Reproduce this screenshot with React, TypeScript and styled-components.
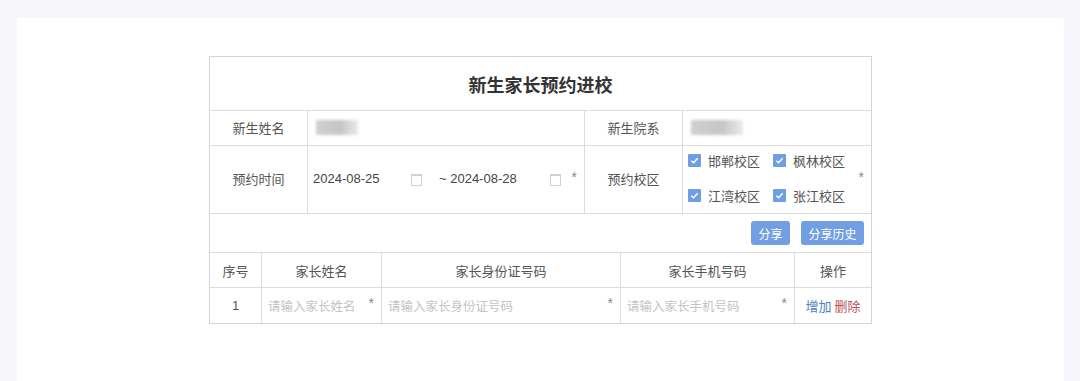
import styled, { createGlobalStyle } from "styled-components";

const GlobalStyle = createGlobalStyle`
  body {
    margin: 0;
    background: #f7f7fb;
    font-family: "Liberation Sans", "Noto Sans CJK SC", sans-serif;
    color: #555;
  }
`;

const Page = styled.div`
  padding: 18px 16px 0 17px;
  height: 381px;
  box-sizing: border-box;
`;

const Panel = styled.div`
  background: #ffffff;
  height: 100%;
  padding-top: 38px;
  box-sizing: border-box;
`;

const Card = styled.div`
  width: 663px;
  margin: 0 auto;
  border: 1px solid #d4d4d4;
  box-sizing: border-box;
  font-size: 13px;
`;

const Title = styled.div`
  height: 53px;
  display: flex;
  align-items: center;
  justify-content: center;
  font-size: 18px;
  font-weight: 700;
  color: #333;
  border-bottom: 1px solid #dcdcdc;
`;

const InfoGrid = styled.div`
  display: grid;
  grid-template-columns: 98px 277px 98px 1fr;
  grid-template-rows: 35px 68px;
`;

const Label = styled.div`
  display: flex;
  align-items: center;
  justify-content: center;
  padding-bottom: 2px;
  border-right: 1px solid #dcdcdc;
  border-bottom: 1px solid #dcdcdc;
  color: #555;
`;

const Value = styled.div<{ $last?: boolean }>`
  display: flex;
  align-items: center;
  padding-left: 5px;
  border-right: ${(p) => (p.$last ? "none" : "1px solid #dcdcdc")};
  border-bottom: 1px solid #dcdcdc;
  position: relative;
  color: #444;
`;

const Blur = styled.div<{ $w: number }>`
  width: ${(p) => p.$w}px;
  height: 15px;
  margin-left: 3px;
  margin-bottom: 2px;
  background: linear-gradient(90deg, #cfcfcf 0%, #c6c6c6 60%, #ececec 100%);
  filter: blur(1.5px);
`;

const DateText = styled.span<{ $w: number }>`
  width: ${(p) => p.$w}px;
  color: #444;
  padding-bottom: 2px;
`;

const CalIcon = styled.span`
  width: 9px;
  height: 9px;
  border: 1px solid #d0d0d0;
  border-top-width: 2px;
  margin-right: 17px;
`;

const Star = styled.span`
  color: #8a8a8a;
  font-size: 14px;
  position: absolute;
  right: 7px;
  top: 50%;
  transform: translateY(-70%);
`;

const CampusGrid = styled.div`
  display: grid;
  grid-template-columns: 85px 85px;
  row-gap: 14px;
  margin-top: -3px;
`;

const CheckItem = styled.label`
  display: flex;
  align-items: center;
  gap: 7px;
  color: #555;
  height: 21px;
`;

const Box = styled.span`
  width: 13px;
  height: 13px;
  background: #6f9ee2;
  border-radius: 1px;
  display: flex;
  align-items: center;
  justify-content: center;
`;

const ButtonBar = styled.div`
  height: 38px;
  display: flex;
  align-items: center;
  justify-content: flex-end;
  gap: 11px;
  padding-right: 7px;
  border-bottom: 1px solid #dcdcdc;
`;

const Button = styled.button`
  height: 24px;
  padding: 0 7.5px;
  border: none;
  border-radius: 3px;
  background: #729fe3;
  color: #fff;
  font-size: 12px;
  font-family: inherit;
`;

const ParentTable = styled.div`
  display: grid;
  grid-template-columns: 52px 120px 239px 174px 1fr;
  grid-auto-rows: 35px;
`;

const HeadCell = styled.div<{ $last?: boolean; $bottom?: boolean }>`
  display: flex;
  align-items: center;
  justify-content: center;
  border-right: ${(p) => (p.$last ? "none" : "1px solid #dcdcdc")};
  border-bottom: ${(p) => (p.$bottom ? "1px solid #dcdcdc" : "none")};
  color: #555;
`;

const InputCell = styled.div`
  display: flex;
  align-items: center;
  padding-left: 6px;
  border-right: 1px solid #dcdcdc;
  position: relative;
  color: #c4c4c4;
  font-size: 12.5px;
`;

const Actions = styled.div`
  display: flex;
  align-items: center;
  justify-content: center;
  gap: 3px;
`;

const ActionLink = styled.span<{ $danger?: boolean }>`
  color: ${(p) => (p.$danger ? "#b8545a" : "#4d7fc4")};
`;

const Check = () => (
  <Box>
    <svg width="9" height="9" viewBox="0 0 10 10">
      <path d="M1.5 5.2 L4 7.5 L8.5 2.5" fill="none" stroke="#fff" strokeWidth="1.6" />
    </svg>
  </Box>
);

const campuses = ["邯郸校区", "枫林校区", "江湾校区", "张江校区"];
const parentHeads = ["序号", "家长姓名", "家长身份证号码", "家长手机号码", "操作"];

export default function App() {
  return (
    <>
      <GlobalStyle />
      <Page>
        <Panel>
          <Card>
            <Title>新生家长预约进校</Title>
            <InfoGrid>
              <Label>新生姓名</Label>
              <Value>
                <Blur $w={42} />
              </Value>
              <Label>新生院系</Label>
              <Value $last>
                <Blur $w={52} />
              </Value>
              <Label>预约时间</Label>
              <Value>
                <DateText $w={98}>2024-08-25</DateText>
                <CalIcon />
                <DateText $w={111}>~ 2024-08-28</DateText>
                <CalIcon />
                <Star>*</Star>
              </Value>
              <Label>预约校区</Label>
              <Value $last>
                <CampusGrid>
                  {campuses.map((c) => (
                    <CheckItem key={c}>
                      <Check />
                      {c}
                    </CheckItem>
                  ))}
                </CampusGrid>
                <Star>*</Star>
              </Value>
            </InfoGrid>
            <ButtonBar>
              <Button>分享</Button>
              <Button>分享历史</Button>
            </ButtonBar>
            <ParentTable>
              {parentHeads.map((h, i) => (
                <HeadCell key={h} $bottom $last={i === parentHeads.length - 1}>
                  {h}
                </HeadCell>
              ))}
              <HeadCell>1</HeadCell>
              <InputCell>
                请输入家长姓名<Star>*</Star>
              </InputCell>
              <InputCell>
                请输入家长身份证号码<Star>*</Star>
              </InputCell>
              <InputCell>
                请输入家长手机号码<Star>*</Star>
              </InputCell>
              <Actions>
                <ActionLink>增加</ActionLink>
                <ActionLink $danger>删除</ActionLink>
              </Actions>
            </ParentTable>
          </Card>
        </Panel>
      </Page>
    </>
  );
}
